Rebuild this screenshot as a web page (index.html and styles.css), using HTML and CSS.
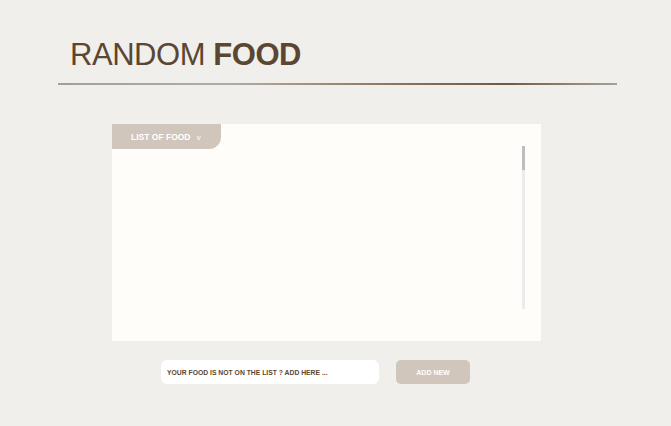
FILE: index.html
```html
<!DOCTYPE html>
<html>
<head>
<meta charset="utf-8">
<link rel="stylesheet" href="styles.css">
</head>
<body>
<div class="page">
  <header class="header">
    <h1 class="title">RANDOM <b>FOOD</b></h1>
  </header>
  <div class="rule"></div>
  <section class="panel">
    <div class="tab">LIST OF FOOD <span class="chev">v</span></div>
    <div class="scroll"><div class="thumb"></div></div>
  </section>
  <form class="add">
    <input class="field" type="text" placeholder="YOUR FOOD IS NOT ON THE LIST ? ADD HERE ...">
    <button class="btn" type="button">ADD NEW</button>
  </form>
</div>
</body>
</html>
```
FILE: styles.css
```css
html, body { margin: 0; padding: 0; }
body {
  background: #f0efeb;
  font-family: "Liberation Sans", Arial, sans-serif;
  width: 671px;
  height: 426px;
  overflow: hidden;
}
.page { display: flex; flex-direction: column; }
.header { padding: 39px 0 0 70px; height: 47px; box-sizing: border-box; }
.title {
  margin: 0;
  font-size: 31px;
  line-height: 31px;
  font-weight: 400;
  color: #5a4632;
  letter-spacing: -0.45px;
  white-space: nowrap;
}
.title b { font-weight: 700; }
.rule {
  margin: 36px 0 0 58px;
  width: 559px;
  height: 1.5px;
  background: linear-gradient(90deg, #a89d92 0%, #b4aca2 30%, #8a7660 60%, #6e5a45 80%, #a8a096 100%);
}
.panel {
  position: relative;
  margin: 39px 0 0 112px;
  width: 429px;
  height: 217px;
  background: #fefdf9;
}
.tab {
  width: 109px;
  height: 25px;
  background: #d0c6bb;
  border-bottom-right-radius: 12px;
  color: #fff;
  font-size: 8.5px;
  font-weight: 700;
  line-height: 26px;
  padding-left: 19px;
  box-sizing: border-box;
}
.chev { font-weight: 400; margin-left: 4px; font-size: 8px; }
.scroll {
  position: absolute;
  left: 410px;
  top: 22px;
  width: 3px;
  height: 163px;
  background: #ebebeb;
}
.thumb { height: 24px; background: #bdbdbd; }
.add {
  display: flex;
  margin: 19px 0 0 161px;
  gap: 17px;
}
.field {
  width: 218px;
  height: 24px;
  border: none;
  border-radius: 6px;
  background: #fff;
  padding: 1px 6px 0;
  box-sizing: border-box;
  font-family: "Liberation Sans", Arial, sans-serif;
  font-size: 6.8px;
  font-weight: 700;
  outline: none;
}
.field::placeholder { color: #5a4632; opacity: 1; }
.btn {
  width: 74px;
  height: 24px;
  border: none;
  border-radius: 5px;
  background: #d0c6bb;
  color: #fff;
  font-family: "Liberation Sans", Arial, sans-serif;
  font-size: 7px;
  font-weight: 700;
  padding: 1px 0 0;
}
```
